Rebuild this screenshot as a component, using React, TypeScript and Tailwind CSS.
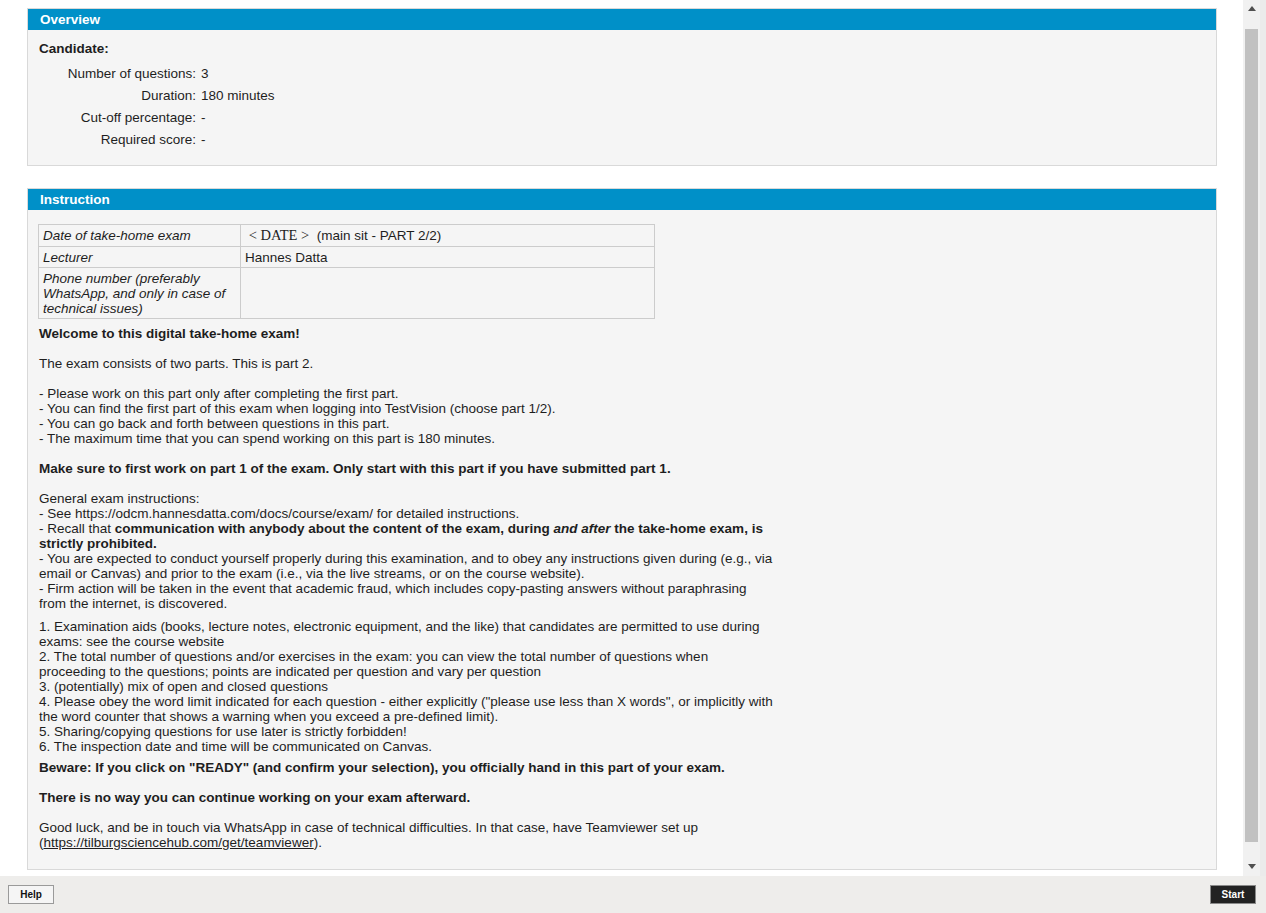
import React from "react";

const font = { fontFamily: '"Liberation Sans", Arial, sans-serif' };

function Panel({ title, children, className = "" }: { title: string; children: React.ReactNode; className?: string }) {
  return (
    <div className={"border border-[#d9d9d9] bg-[#f5f5f5] " + className}>
      <div className="h-[21px] bg-[#0090c8] pl-[12px] text-[13.5px] font-bold leading-[21px] text-white">{title}</div>
      {children}
    </div>
  );
}

function Row({ label, value }: { label: string; value: string }) {
  return (
    <div className="grid h-[22px] grid-cols-[157px_1fr] items-center">
      <div className="text-right">{label}</div>
      <div className="pl-[5px]">{value}</div>
    </div>
  );
}

export default function App() {
  return (
    <div className="flex h-[913px] w-[1266px] flex-col overflow-hidden bg-white text-[13.5px] leading-[15px] text-[#1e1e1e]" style={font}>
      <div className="flex min-h-0 flex-1">
        <div className="min-w-0 flex-1 overflow-hidden bg-white pl-[27px] pr-[26px] pt-[8px]">
          <Panel title="Overview">
            <div className="pb-[15px] pl-[11px] pr-[10px] pt-[11px]">
              <div className="font-bold">Candidate:</div>
              <div className="mt-[6px]">
                <Row label="Number of questions:" value="3" />
                <Row label="Duration:" value="180 minutes" />
                <Row label="Cut-off percentage:" value="-" />
                <Row label="Required score:" value="-" />
              </div>
            </div>
          </Panel>

          <Panel title="Instruction" className="mt-[22px]">
            <div className="pb-[19px] pl-[10px] pr-[10px] pt-[14px]">
              <table className="w-[617px] border-collapse">
                <tbody>
                  <tr className="h-[22px]">
                    <td className="w-[202px] border border-[#cccccc] px-[4px] py-0 align-middle italic">Date of take-home exam</td>
                    <td className="border border-[#cccccc] px-[4px] py-0 align-middle">
                      <span style={{ fontFamily: '"Liberation Serif", "Times New Roman", serif' }} className="text-[14.5px]">
                        {"\u00a0< DATE >\u00a0"}
                      </span>
                      {"\u00a0(main sit - PART 2/2)"}
                    </td>
                  </tr>
                  <tr className="h-[21px]">
                    <td className="border border-[#cccccc] px-[4px] py-0 italic">Lecturer</td>
                    <td className="border border-[#cccccc] px-[4px] py-0">Hannes Datta</td>
                  </tr>
                  <tr className="h-[51px]">
                    <td className="border border-[#cccccc] px-[4px] py-[2px] italic">
                      Phone number (preferably WhatsApp, and only in case of technical issues)
                    </td>
                    <td className="border border-[#cccccc] px-[4px] py-[2px]"></td>
                  </tr>
                </tbody>
              </table>

              <div className="ml-[1px] mt-[7px] w-[735px]">
                <div>
                  <div className="font-bold">Welcome to this digital take-home exam!</div>
                  <div className="h-[15px]" />
                  <div>The exam consists of two parts. This is part 2.</div>
                  <div className="h-[15px]" />
                  <div>- Please work on this part only after completing the first part.</div>
                  <div>- You can find the first part of this exam when logging into TestVision (choose part 1/2).</div>
                  <div>- You can go back and forth between questions in this part.</div>
                  <div>- The maximum time that you can spend working on this part is 180 minutes.</div>
                  <div className="h-[15px]" />
                  <div className="font-bold">Make sure to first work on part 1 of the exam. Only start with this part if you have submitted part 1.</div>
                  <div className="h-[15px]" />
                  <div>General exam instructions:</div>
                  <div>- See https://odcm.hannesdatta.com/docs/course/exam/ for detailed instructions.</div>
                  <div>
                    {"- Recall that "}
                    <b>
                      communication with anybody about the content of the exam, during <i>and after</i> the take-home exam, is strictly prohibited.
                    </b>
                  </div>
                  <div>
                    - You are expected to conduct yourself properly during this examination, and to obey any instructions given during (e.g., via email or Canvas) and prior to the exam (i.e., via the live streams, or on the course website).
                  </div>
                  <div>
                    - Firm action will be taken in the event that academic fraud, which includes copy-pasting answers without paraphrasing from the internet, is discovered.
                  </div>
                </div>

                <div className="mt-[8px]">
                  <div>1. Examination aids (books, lecture notes, electronic equipment, and the like) that candidates are permitted to use during exams: see the course website</div>
                  <div>2. The total number of questions and/or exercises in the exam: you can view the total number of questions when proceeding to the questions; points are indicated per question and vary per question</div>
                  <div>3. (potentially) mix of open and closed questions</div>
                  <div>4. Please obey the word limit indicated for each question - either explicitly ("please use less than X words", or implicitly with the word counter that shows a warning when you exceed a pre-defined limit).</div>
                  <div>5. Sharing/copying questions for use later is strictly forbidden!</div>
                  <div>6. The inspection date and time will be communicated on Canvas.</div>
                </div>

                <div className="mt-[6px]">
                  <div className="font-bold">Beware: If you click on "READY" (and confirm your selection), you officially hand in this part of your exam.</div>
                  <div className="h-[15px]" />
                  <div className="font-bold">There is no way you can continue working on your exam afterward.</div>
                  <div className="h-[15px]" />
                  <div>
                    {"Good luck, and be in touch via WhatsApp in case of technical difficulties. In that case, have Teamviewer set up ("}
                    <span className="underline">https://tilburgsciencehub.com/get/teamviewer</span>
                    {")."}
                  </div>
                </div>
              </div>
            </div>
          </Panel>
        </div>

        {/* scrollbar */}
        <div className="flex w-[17px] flex-col bg-[#f1f1f1]">
          <div className="flex h-[17px] items-center justify-center">
            <svg width="8" height="5" viewBox="0 0 8 5"><path d="M0 5 L4 0 L8 5 Z" fill="#505050" /></svg>
          </div>
          <div className="flex flex-1 flex-col px-[2px] pb-[17px] pt-[12px]">
            <div className="h-[813px] bg-[#c1c1c1]" />
          </div>
          <div className="flex h-[17px] items-center justify-center pb-[2px]">
            <svg width="8" height="5" viewBox="0 0 8 5"><path d="M0 0 L8 0 L4 5 Z" fill="#505050" /></svg>
          </div>
        </div>
        <div className="w-[6px] bg-[#ebebeb]" />
      </div>

      {/* bottom bar */}
      <div className="flex h-[37px] items-center justify-between bg-[#eeedeb] pl-[8px] pr-[10px]">
        <button className="h-[19px] w-[46px] border border-[#9a9a9a] bg-[#f5f5f5] text-[10px] font-bold leading-none text-[#111]">Help</button>
        <button className="h-[19px] w-[46px] border border-[#8a8a8a] bg-[#222222] text-[10px] font-bold leading-none text-white">Start</button>
      </div>
    </div>
  );
}
